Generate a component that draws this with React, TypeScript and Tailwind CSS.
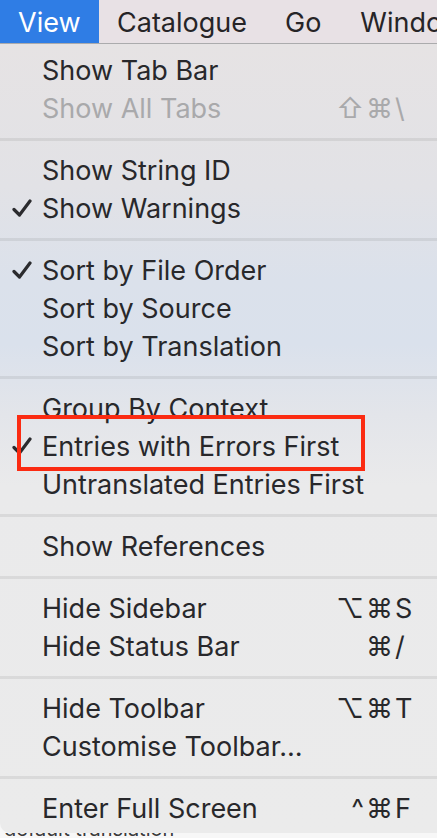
import React from "react"

type Item = {
  label: string
  checked?: boolean
  disabled?: boolean
  mods?: string
  keyChar?: string
  boxed?: boolean
}

const groups: Item[][] = [
  [{ label: "Show Tab Bar" }, { label: "Show All Tabs", disabled: true, mods: "⇧⌘", keyChar: "\\" }],
  [{ label: "Show String ID" }, { label: "Show Warnings", checked: true }],
  [{ label: "Sort by File Order", checked: true }, { label: "Sort by Source" }, { label: "Sort by Translation" }],
  [
    { label: "Group By Context" },
    { label: "Entries with Errors First", checked: true, boxed: true },
    { label: "Untranslated Entries First" },
  ],
  [{ label: "Show References" }],
  [
    { label: "Hide Sidebar", mods: "⌥⌘", keyChar: "S" },
    { label: "Hide Status Bar", mods: "⌘", keyChar: "/" },
  ],
  [
    { label: "Hide Toolbar", mods: "⌥⌘", keyChar: "T" },
    { label: "Customise Toolbar…" },
  ],
  [{ label: "Enter Full Screen", mods: "^⌘", keyChar: "F" }],
]

function Check() {
  return (
    <svg width="20" height="18" viewBox="0 0 20 18" fill="none">
      <path d="M2 10.5 L7.5 16 L18 2" stroke="#2b2b2e" strokeWidth="3.2" strokeLinecap="round" strokeLinejoin="round" />
    </svg>
  )
}

function Row({ item }: { item: Item }) {
  const color = item.disabled ? "text-[#a9a9ab]" : "text-[#28282b]"
  return (
    <div className={`relative flex h-[38px] items-center pr-[20px] ${color}`}>
      <div className="flex w-[42px] justify-start pl-[12px]">{item.checked && <Check />}</div>
      <span className="flex-1 whitespace-nowrap">{item.label}</span>
      {item.keyChar && (
        <span className="flex items-center">
          <span className="text-right tracking-[2px]">{item.mods}</span>
          <span className="w-[22px]">{item.keyChar}</span>
        </span>
      )}
      {item.boxed && (
        <div className="absolute left-[17px] top-[-12px] h-[56px] w-[348px] border-4 border-[#fb2b12]" />
      )}
    </div>
  )
}

export default function App() {
  return (
    <div
      className="relative h-[838px] w-[437px] overflow-hidden bg-[#f7f7f7] text-[27px] leading-none"
      style={{ fontFamily: '"Inter", "DejaVu Sans", sans-serif' }}
    >
      {/* menu bar */}
      <div className="flex h-[44px] items-center overflow-hidden border-b border-[#ababad] bg-[#e8e1e5] text-[#262427]">
        <div className="flex h-full w-[99px] shrink-0 items-center bg-[#2f7de5] pl-[18px] pt-[2px] text-white">
          View
        </div>
        <span className="ml-[18px] shrink-0 pt-[2px]">Catalogue</span>
        <span className="ml-[38px] shrink-0 pt-[2px]">Go</span>
        <span className="ml-[39px] shrink-0 whitespace-nowrap pt-[2px]">Window</span>
      </div>

      <div className="rounded-bl-[10px] bg-[linear-gradient(180deg,#e6e3e4_0%,#e2e2e6_18%,#dbe1eb_30%,#dae1ec_38%,#e3e5ea_47%,#eaeaeb_56%,#ebebeb_100%)] pb-[6px] pt-[7px]">
        {groups.map((g, i) => (
          <div key={i}>
            {i > 0 && (
              <div className="pb-[10px] pt-[11px]">
                <div className="h-[3px] bg-black/[0.07]" />
              </div>
            )}
            {g.map((item) => (
              <Row key={item.label} item={item} />
            ))}
          </div>
        ))}
      </div>

      <div className="h-[5px] overflow-hidden pl-[4px] text-[#3a3a3a]">
        <div className="-mt-[14px] whitespace-nowrap text-[20px]">default translation</div>
      </div>
    </div>
  )
}
